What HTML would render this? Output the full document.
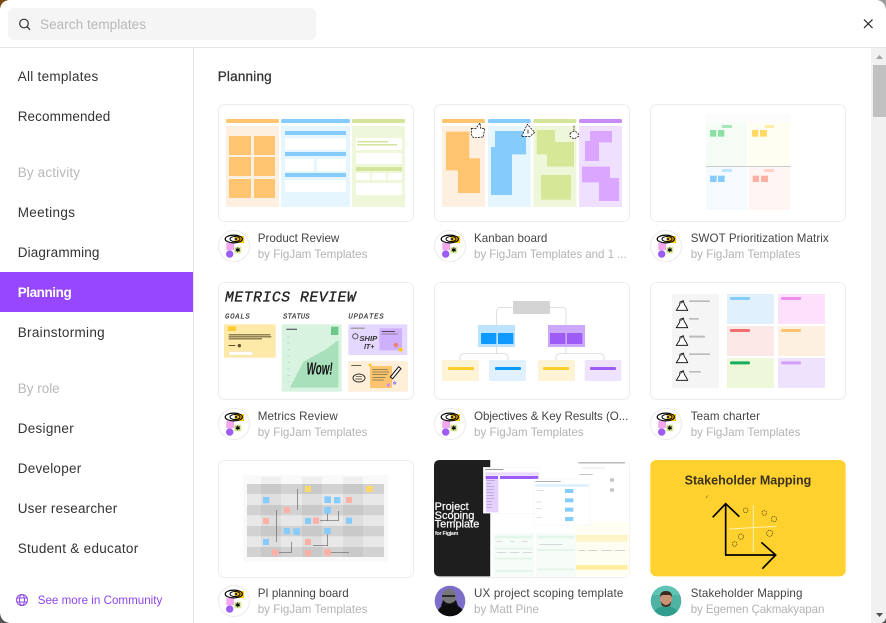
<!DOCTYPE html>
<html><head><meta charset="utf-8"><title>Templates</title>
<style>
html,body{margin:0;padding:0;background:#fff;width:886px;height:623px;overflow:hidden}
svg{display:block;filter:blur(.3px)}
text{font-family:"Liberation Sans",sans-serif}
.n{font-size:13.5px;fill:#333}
.m{font-size:13.5px;fill:#b8b8b8}
.t{font-size:11.6px;fill:#444}
.s{font-size:11.6px;fill:#b3b3b3}
.c{fill:#fff;stroke:#ececec;stroke-width:1}
</style></head><body>
<svg xmlns="http://www.w3.org/2000/svg" width="886" height="623" viewBox="0 0 886 623">
<defs>
<g id="fj">
<circle cx="16" cy="16" r="15.5" fill="#fff" stroke="#ebebeb"/>
<rect x="16.700" y="6" width="9.300" height="7" fill="#ffc700"/>
<rect x="8.300" y="13" width="7.700" height="7" fill="#f3a6f0"/>
<rect x="16.300" y="16.700" width="7" height="6.600" fill="#d8ea9e"/>
<circle cx="11.700" cy="24" r="3.700" fill="#9d5cf5"/>
<ellipse cx="15.800" cy="9" rx="8.600" ry="3.900" fill="none" stroke="#000" stroke-width="1.200"/>
<ellipse cx="17" cy="9" rx="5" ry="2.500" fill="none" stroke="#000" stroke-width="1"/>
<circle cx="18" cy="9" r="1.300" fill="#333"/>
<path d="M19.800 17.500v4.800M17.700 18.700l4.200 2.400M21.900 18.700l-4.200 2.400" stroke="#000" stroke-width="1"/>
</g>
<g id="hand"><path d="M-16 38 Q-10 28 -6 22 L-5 13 L5 9 L8 20 Q14 28 18 38 Z" fill="#fff" stroke="#000" stroke-width="2.500"/><path d="M-3 17 L4 12" stroke="#000" stroke-width="2"/></g>
</defs>

<rect width="886" height="623" fill="#fff"/>

<!-- header -->
<rect x="8" y="8" width="308" height="32" rx="6" fill="#f5f5f5"/>
<circle cx="24" cy="23.500" r="4.300" fill="none" stroke="#333" stroke-width="1.200"/>
<path d="M27 26.600 L30 29.700" stroke="#333" stroke-width="1.300"/>
<text x="40" y="29" class="m" textLength="106" lengthAdjust="spacing">Search templates</text>
<path d="M864 19.500 L872.500 28 M872.500 19.500 L864 28" stroke="#222" stroke-width="1.200"/>
<rect x="0" y="47" width="886" height="1" fill="#e6e6e6"/>

<!-- sidebar -->
<rect x="193" y="48" width="1" height="575" fill="#e6e6e6"/>
<rect x="0" y="272" width="193" height="40" fill="#9747ff"/>
<text x="17.700" y="81" class="n" textLength="80.600" lengthAdjust="spacing">All templates</text>
<text x="17.700" y="121" class="n" textLength="92.600" lengthAdjust="spacing">Recommended</text>
<text x="17.700" y="177" class="m" textLength="62.300" lengthAdjust="spacing">By activity</text>
<text x="17.700" y="217" class="n" textLength="57.300" lengthAdjust="spacing">Meetings</text>
<text x="17.700" y="257" class="n" textLength="81.700" lengthAdjust="spacing">Diagramming</text>
<text x="17.700" y="297" font-size="13.500" font-weight="700" fill="#fff" textLength="54" lengthAdjust="spacing">Planning</text>
<text x="17.700" y="337" class="n" textLength="87" lengthAdjust="spacing">Brainstorming</text>
<text x="17.700" y="393" class="m" textLength="42" lengthAdjust="spacing">By role</text>
<text x="17.700" y="433" class="n" textLength="56" lengthAdjust="spacing">Designer</text>
<text x="17.700" y="473" class="n" textLength="63.500" lengthAdjust="spacing">Developer</text>
<text x="17.700" y="513" class="n" textLength="99.500" lengthAdjust="spacing">User researcher</text>
<text x="17.700" y="553" class="n" textLength="120.500" lengthAdjust="spacing">Student &amp; educator</text>
<g fill="none" stroke="#8f45e8" stroke-width="1"><circle cx="22" cy="600" r="5.500"/><ellipse cx="22" cy="600" rx="2.500" ry="5.500"/><path d="M16.500 598H27.500M16.500 602H27.500"/></g>
<text x="37.700" y="604" font-size="11.600" fill="#8f45e8" textLength="124.600" lengthAdjust="spacing">See more in Community</text>

<!-- main heading -->
<text x="217.700" y="81" font-size="13.500" fill="#333" stroke="#333" stroke-width=".25" textLength="54" lengthAdjust="spacing">Planning</text>

<!-- cards -->
<rect class="c" x="218.500" y="104.500" width="195" height="117" rx="6"/>
<rect class="c" x="434.500" y="104.500" width="195" height="117" rx="6"/>
<rect class="c" x="650.500" y="104.500" width="195" height="117" rx="6"/>
<rect class="c" x="218.500" y="282.500" width="195" height="117" rx="6"/>
<rect class="c" x="434.500" y="282.500" width="195" height="117" rx="6"/>
<rect class="c" x="650.500" y="282.500" width="195" height="117" rx="6"/>
<rect class="c" x="218.500" y="460.500" width="195" height="117" rx="6"/>

<!-- Product Review -->
<g>
<rect x="226" y="119" width="53" height="4" rx="1.500" fill="#ffc470"/><rect x="281" y="119" width="69" height="4" rx="1.500" fill="#85cbfc"/><rect x="352" y="119" width="53" height="4" rx="1.500" fill="#d2e59a"/>
<rect x="226" y="126" width="53" height="81" fill="#fdf0e0"/><rect x="281" y="126" width="69" height="81" fill="#e5f6ff"/><rect x="352" y="126" width="53" height="81" fill="#eff7da"/>
<g fill="#ffc470"><rect x="229" y="136" width="22" height="19"/><rect x="254" y="136" width="21" height="19"/><rect x="229" y="157" width="22" height="19"/><rect x="254" y="157" width="21" height="19"/><rect x="229" y="179" width="22" height="19"/><rect x="254" y="179" width="21" height="19"/></g>
<g fill="#85cbfc"><rect x="285" y="131" width="61" height="4"/><rect x="285" y="152" width="61" height="4"/><rect x="285" y="173" width="61" height="4"/></g>
<g fill="#fff"><rect x="285" y="138" width="61" height="12"/><rect x="285" y="159" width="29" height="12"/><rect x="317" y="159" width="29" height="12"/><rect x="285" y="180" width="61" height="12"/>
<rect x="356" y="138" width="46" height="12"/><rect x="356" y="153" width="46" height="11"/><rect x="356" y="173" width="14" height="7"/><rect x="372" y="173" width="14" height="7"/><rect x="388" y="173" width="14" height="7"/><rect x="356" y="183" width="46" height="12"/></g>
<g fill="#d2e59a"><rect x="357" y="141" width="31" height="1.500"/><rect x="357" y="144" width="40" height="1.500"/><rect x="356" y="167" width="46" height="4"/></g>
</g>

<!-- Kanban + SWOT -->
<g transform="translate(430 95) scale(.33333)">
<rect x="36" y="72" width="129" height="12" rx="4" fill="#ffc470"/><rect x="174" y="72" width="128" height="12" rx="4" fill="#85cbfc"/><rect x="310" y="72" width="129" height="12" rx="4" fill="#d2e59a"/><rect x="447" y="72" width="129" height="12" rx="4" fill="#c98cf5"/>
<rect x="36" y="93" width="129" height="243" fill="#fdf0e0"/><rect x="174" y="93" width="128" height="243" fill="#e5f6ff"/><rect x="310" y="93" width="129" height="243" fill="#eff7da"/><rect x="447" y="93" width="129" height="243" fill="#efe0ff"/>
<path d="M48 110H118V190H150V294H84V226H48Z" fill="#ffc470"/>
<path d="M195 108H288V178H246V300H183V156H195Z" fill="#85cbfc"/>
<path d="M320 105H375V141H432V215H351V178H320Z" fill="#d6e897"/><rect x="333" y="240" width="90" height="74" fill="#d6e897"/>
<path d="M480 108H546V142H507V198H465V138H480Z" fill="#dba6ff"/><path d="M456 215H540V249H567V318H507V262H456Z" fill="#dba6ff"/>
<g fill="#fff" stroke="#000" stroke-width="2.200" stroke-dasharray="6 3"><path d="M124 100H138L150 84 L152 100 H164 L160 126 L130 128 L124 118Z"/><path d="M275 124 L292 88 L314 112 L300 124Z"/><path d="M432 92 V108 M420 116 Q430 104 444 114 L446 124 L432 132 L420 124Z"/></g>
<path d="M294 104V116" stroke="#000" stroke-width="2.200"/>

<rect x="828" y="57" width="254" height="27" fill="#fcfcfc"/>
<rect x="828" y="84" width="123" height="129" fill="#f5fcf5"/><rect x="955" y="84" width="127" height="129" fill="#fffef3"/><rect x="828" y="216" width="123" height="129" fill="#f4faff"/><rect x="955" y="216" width="125" height="129" fill="#fff6f3"/>
<rect x="828" y="213" width="254" height="1.500" fill="#999"/>
<rect x="876" y="90" width="30" height="9" fill="#a6e8b8"/><rect x="840" y="105" width="19" height="20" fill="#8ce0a5"/><rect x="864" y="105" width="19" height="20" fill="#8ce0a5"/>
<rect x="1004" y="90" width="28" height="9" fill="#ffecaa"/><rect x="966" y="105" width="19" height="20" fill="#ffd966"/><rect x="990" y="105" width="21" height="20" fill="#ffd966"/>
<rect x="876" y="222" width="30" height="9" fill="#c0e3ff"/><rect x="840" y="242" width="20" height="19" fill="#85cbfc"/><rect x="864" y="242" width="20" height="19" fill="#85cbfc"/>
<rect x="1002" y="222" width="30" height="9" fill="#ffcfc8"/><rect x="968" y="242" width="19" height="19" fill="#ffb0a5"/><rect x="993" y="242" width="21" height="19" fill="#ffb0a5"/>
</g>

<!-- Metrics Review -->
<g transform="translate(210 275) scale(.33333)">
<text x="45" y="80" font-size="44" font-style="italic" fill="#222" stroke="#222" stroke-width="1" style="font-family:'Liberation Mono',monospace" textLength="392" lengthAdjust="spacing">METRICS REVIEW</text>
<g font-size="22" font-style="italic" fill="#333" stroke="#333" stroke-width=".5"><text x="45" y="131" textLength="74" lengthAdjust="spacing" style="font-family:'Liberation Mono',monospace">GOALS</text><text x="219" y="131" textLength="80" lengthAdjust="spacing" style="font-family:'Liberation Mono',monospace">STATUS</text><text x="415" y="131" textLength="106" lengthAdjust="spacing" style="font-family:'Liberation Mono',monospace">UPDATES</text></g>
<rect x="42" y="148" width="155" height="100" fill="#fde9a8"/><rect x="54" y="154" width="24" height="14" fill="#ffcc33"/>
<g fill="#5a4f2a"><rect x="56" y="178" width="125" height="3"/><rect x="56" y="184" width="128" height="3"/><rect x="56" y="190" width="100" height="3"/><rect x="56" y="210" width="20" height="3"/><circle cx="88" cy="212" r="5"/></g>
<rect x="57" y="230" width="70" height="10" fill="#fff" stroke="#ddd"/>
<rect x="215" y="148" width="180" height="202" fill="#d8f3df"/>
<path d="M240 338L280 260L345 225L385 195V338Z" fill="#a8e0bb"/>
<rect x="363" y="155" width="22" height="25" fill="#6cc88a"/>
<rect x="229" y="161" width="32" height="4" fill="#667"/>
<g fill="#bcd"><rect x="232" y="185" width="8" height="2"/><rect x="232" y="203" width="8" height="2"/><rect x="232" y="222" width="8" height="2"/><rect x="232" y="242" width="8" height="2"/><rect x="232" y="262" width="8" height="2"/><rect x="232" y="281" width="8" height="2"/><rect x="232" y="300" width="8" height="2"/><rect x="232" y="320" width="8" height="2"/></g>
<text x="290" y="298" font-size="52" font-weight="700" font-style="italic" fill="#111" textLength="78" lengthAdjust="spacingAndGlyphs">Wow!</text>
<rect x="415" y="148" width="177" height="92" fill="#e5d8ff"/><rect x="508" y="160" width="68" height="66" fill="#cfb0ff"/>
<text x="448" y="198" font-size="23" font-weight="700" font-style="italic" fill="#333">SHIP</text><text x="462" y="222" font-size="21" font-weight="700" font-style="italic" fill="#333">IT+</text>
<rect x="422" y="158" width="42" height="3" fill="#887"/><rect x="515" y="168" width="40" height="3" fill="#545"/><rect x="515" y="176" width="48" height="2" fill="#765"/>
<circle cx="436" cy="184" r="8" fill="none" stroke="#444" stroke-width="2.500"/><circle cx="558" cy="210" r="7" fill="#f08080"/><circle cx="572" cy="224" r="6" fill="#ffc700"/>
<rect x="415" y="258" width="179" height="92" fill="#fdefd8"/><rect x="480" y="273" width="66" height="66" fill="#ffc470"/>
<g fill="#664"><rect x="424" y="270" width="30" height="3"/><rect x="487" y="282" width="46" height="2"/><rect x="487" y="290" width="50" height="2"/><rect x="487" y="298" width="44" height="2"/><rect x="487" y="306" width="40" height="2"/><rect x="487" y="314" width="34" height="2"/></g>
<ellipse cx="447" cy="309" rx="18" ry="12" fill="none" stroke="#333" stroke-width="3"/><path d="M438 304h18M436 312h20" stroke="#333" stroke-width="2"/>
<path d="M541 306L566 275L573 281L548 311Z" fill="#fff" stroke="#111" stroke-width="3"/>
<circle cx="535" cy="330" r="5" fill="#c98cf5"/><circle cx="554" cy="324" r="5" fill="#9d8cf5"/><circle cx="480" cy="270" r="4" fill="#ffc700"/>
</g>

<!-- OKR + Team charter -->
<g transform="translate(430 275) scale(.33333)">
<g fill="none" stroke="#d0d0d0" stroke-width="2"><path d="M249 97H212Q200 97 200 109V150"/><path d="M360 97H396Q408 97 408 109V150"/><path d="M90 255V247Q90 236 102 236H222Q234 236 234 247V255"/><path d="M378 255V247Q378 236 390 236H510Q522 236 522 247V255"/><path d="M200 216V236M408 216V236"/></g>
<rect x="249" y="78" width="111" height="39" fill="#d4d4d4"/>
<rect x="144" y="150" width="111" height="66" fill="#bde3ff"/><rect x="153" y="174" width="46" height="33" rx="3" fill="#0d99ff"/><rect x="204" y="174" width="46" height="33" fill="#0d99ff"/>
<rect x="354" y="150" width="111" height="66" fill="#cba8f9"/><rect x="360" y="174" width="46" height="33" fill="#9d5cf5"/><rect x="411" y="174" width="46" height="33" fill="#9d5cf5"/>
<rect x="36" y="255" width="111" height="63" rx="3" fill="#fff3d6"/><rect x="54" y="276" width="78" height="9" rx="3" fill="#ffcd29"/>
<rect x="177" y="255" width="111" height="63" rx="3" fill="#e0f1fd"/><rect x="195" y="276" width="78" height="9" rx="3" fill="#0d99ff"/>
<rect x="324" y="255" width="111" height="63" rx="3" fill="#fff3d6"/><rect x="339" y="276" width="78" height="9" rx="3" fill="#ffcd29"/>
<rect x="464" y="255" width="110" height="63" rx="3" fill="#efe2fd"/><rect x="480" y="276" width="78" height="9" rx="3" fill="#9d5cf5"/>

<rect x="726" y="57" width="141" height="283" fill="#f5f5f5"/>
<use href="#hand" x="755" y="68"/><use href="#hand" x="755" y="120"/><use href="#hand" x="755" y="173"/><use href="#hand" x="755" y="225"/><use href="#hand" x="755" y="278"/>
<g fill="#bbb"><rect x="777" y="76" width="63" height="5" rx="2"/><rect x="777" y="129" width="30" height="5" rx="2"/><rect x="777" y="182" width="48" height="6" rx="2"/><rect x="777" y="235" width="63" height="5" rx="2"/><rect x="777" y="288" width="36" height="5" rx="2"/></g>
<rect x="891" y="57" width="141" height="90" fill="#e0f0fd"/><rect x="900" y="66" width="60" height="9" rx="3" fill="#85cbfc"/>
<rect x="1044" y="57" width="141" height="90" fill="#fde0fb"/><rect x="1053" y="66" width="60" height="9" rx="3" fill="#f08df0"/>
<rect x="891" y="153" width="141" height="90" fill="#fde8e8"/><rect x="900" y="162" width="60" height="9" rx="3" fill="#f07070"/>
<rect x="1044" y="153" width="141" height="90" fill="#fdf0e0"/><rect x="1053" y="162" width="60" height="9" rx="3" fill="#ffc470"/>
<rect x="891" y="249" width="141" height="90" fill="#eff7da"/><rect x="900" y="259" width="60" height="9" rx="4" fill="#14ae5c"/>
<rect x="1044" y="249" width="141" height="90" fill="#efe2fd"/><rect x="1053" y="259" width="60" height="9" rx="3" fill="#d69ff5"/>
</g>

<!-- PI planning -->
<g transform="translate(210 450) scale(.33333)">
<rect x="100" y="75" width="435" height="260" fill="#f9f9f9"/>
<g fill="#e8e8e8"><rect x="111" y="132" width="411" height="33"/><rect x="111" y="196" width="411" height="32"/><rect x="111" y="259" width="411" height="32"/></g>
<g fill="#d2d2d2"><rect x="111" y="102" width="411" height="30"/><rect x="111" y="165" width="411" height="31"/><rect x="111" y="228" width="411" height="31"/><rect x="111" y="291" width="411" height="30"/></g>
<g fill="#000" fill-opacity=".04"><rect x="153" y="81" width="60" height="240"/><rect x="276" y="81" width="60" height="240"/><rect x="399" y="81" width="60" height="240"/></g>
<g fill="none" stroke="#666" stroke-width="2"><path d="M263 117V180M200 180V276M245 276V307H207M353 190V212H330M385 183V212H353M353 253V287H309M360 307H417"/></g>
<g fill="#85cbfc"><rect x="159" y="141" width="19" height="19"/><rect x="343" y="139" width="20" height="20"/><rect x="372" y="141" width="19" height="19"/><rect x="343" y="171" width="20" height="20"/><rect x="285" y="204" width="18" height="18"/><rect x="408" y="203" width="18" height="18"/><rect x="221" y="234" width="19" height="19"/><rect x="250" y="235" width="20" height="20"/><rect x="343" y="234" width="19" height="18"/><rect x="159" y="267" width="18" height="18"/></g>
<g fill="#ffb0a5"><rect x="408" y="141" width="18" height="18"/><rect x="222" y="171" width="18" height="18"/><rect x="159" y="204" width="18" height="18"/><rect x="309" y="203" width="18" height="18"/><rect x="285" y="267" width="18" height="18"/><rect x="186" y="298" width="19" height="19"/><rect x="285" y="300" width="18" height="18"/><rect x="343" y="297" width="20" height="20"/></g>
<g fill="#ffd966"><rect x="285" y="108" width="18" height="18"/><rect x="468" y="108" width="20" height="18"/></g>
</g>

<!-- UX project scoping -->
<rect class="c" x="434.500" y="460.500" width="195" height="117" rx="6"/>
<g transform="translate(430 455) scale(.33333)">
<path d="M30 15H181V364H30Q12 364 12 346V33Q12 15 30 15Z" fill="#1e1e1e"/>
<path d="M181 15H580Q598 15 598 33V346Q598 364 580 364H181Z" fill="#fff"/>
<g fill="#fff" stroke="#fff" stroke-width=".6" font-size="33"><text x="14" y="165" textLength="102" lengthAdjust="spacingAndGlyphs">Project</text><text x="14" y="192" textLength="119" lengthAdjust="spacingAndGlyphs">Scoping</text><text x="14" y="218" textLength="134" lengthAdjust="spacingAndGlyphs">Template</text></g>
<text x="15" y="240" font-size="16" fill="#fff" font-weight="700" textLength="70" lengthAdjust="spacing">for Figjam</text>
<rect x="433" y="200" width="165" height="164" fill="#fffef3"/><rect x="438" y="240" width="155" height="20" fill="#fff4c8"/><rect x="438" y="330" width="155" height="14" fill="#ffeda0"/>
<g fill="#bbb"><rect x="445" y="286" width="20" height="2"/><rect x="475" y="286" width="28" height="2"/><rect x="515" y="286" width="30" height="2"/><rect x="555" y="286" width="30" height="2"/></g>
<rect x="190" y="235" width="123" height="129" fill="#f6fcf8"/><rect x="318" y="235" width="120" height="129" fill="#f6fcf8"/>
<g fill="#e4f6ea"><rect x="195" y="242" width="113" height="8"/><rect x="195" y="278" width="113" height="6"/><rect x="195" y="308" width="113" height="6"/><rect x="195" y="345" width="113" height="6"/><rect x="323" y="242" width="110" height="8"/><rect x="323" y="282" width="110" height="6"/><rect x="323" y="340" width="110" height="6"/></g>
<g fill="#c8c8c8"><rect x="200" y="258" width="14" height="2"/><rect x="240" y="258" width="14" height="2"/><rect x="278" y="258" width="14" height="2"/><rect x="200" y="292" width="30" height="2"/><rect x="240" y="292" width="28" height="2"/><rect x="278" y="292" width="28" height="2"/><rect x="328" y="268" width="70" height="2"/></g>
<rect x="445" y="22" width="140" height="3" fill="#999"/><rect x="455" y="38" width="70" height="2" fill="#ddd"/><rect x="448" y="57" width="40" height="2" fill="#aaa"/>
<g fill="#c4c4c4"><rect x="540" y="70" width="12" height="10"/><rect x="540" y="100" width="12" height="10"/><rect x="450" y="72" width="16" height="2"/></g>
<rect x="160" y="37" width="170" height="138" fill="#fff" stroke="#ececec"/><rect x="165" y="42" width="55" height="3" fill="#999"/>
<rect x="165" y="52" width="162" height="10" fill="#eadcff"/><rect x="167" y="63" width="38" height="109" fill="#e5d0ff"/><rect x="167" y="63" width="37" height="9" fill="#9d5cf5"/><rect x="210" y="63" width="115" height="9" fill="#9d5cf5"/>
<g fill="#a99ac0"><rect x="170" y="76" width="24" height="2"/><rect x="170" y="85" width="14" height="2"/><rect x="170" y="94" width="22" height="2"/><rect x="170" y="103" width="22" height="2"/><rect x="170" y="112" width="22" height="2"/><rect x="170" y="121" width="22" height="2"/><rect x="170" y="130" width="24" height="2"/><rect x="170" y="139" width="16" height="2"/><rect x="170" y="148" width="16" height="2"/><rect x="170" y="157" width="16" height="2"/></g>
<rect x="312" y="72" width="168" height="138" fill="#fff" stroke="#ececec"/><rect x="316" y="78" width="76" height="2" fill="#888"/><rect x="316" y="88" width="160" height="7" fill="#d8eefd"/>
<g fill="#85cbfc"><rect x="405" y="102" width="25" height="12"/><rect x="405" y="130" width="25" height="12"/><rect x="405" y="158" width="25" height="12"/><rect x="405" y="186" width="25" height="12"/></g>
<g fill="#ccc"><rect x="320" y="106" width="22" height="2"/><rect x="320" y="140" width="14" height="2"/><rect x="320" y="160" width="14" height="2"/><rect x="320" y="186" width="14" height="2"/></g>
</g>

<!-- Stakeholder -->
<g transform="translate(640 455) scale(.33333)">
<rect x="31" y="15" width="586" height="349" rx="18" fill="#ffd12e"/>
<text x="134" y="89" font-size="38" font-weight="700" fill="#3a3320" textLength="380" lengthAdjust="spacingAndGlyphs">Stakeholder Mapping</text>
<path d="M340 150V290M268 222L410 214" stroke="#fff2b0" stroke-width="3" fill="none"/>
<path d="M257 300V146M218 187L257 146L298 185M255 300H407M364 262L407 300L367 341" stroke="#000" stroke-width="5" fill="none"/>
<g fill="none" stroke="#4a3d10" stroke-width="2" stroke-dasharray="4 2"><circle cx="317" cy="166" r="7"/><circle cx="373" cy="174" r="7"/><circle cx="402" cy="192" r="8"/><circle cx="303" cy="245" r="8"/><circle cx="284" cy="267" r="7"/><circle cx="389" cy="235" r="9"/><path d="M198 128l6-6"/></g>
</g>

<!-- avatars -->
<use href="#fj" x="218" y="230"/><use href="#fj" x="434" y="230"/><use href="#fj" x="650" y="230"/>
<use href="#fj" x="218" y="408"/><use href="#fj" x="434" y="408"/><use href="#fj" x="650" y="408"/>
<use href="#fj" x="218" y="585"/>
<clipPath id="a1"><circle cx="450" cy="601" r="15.300"/></clipPath>
<g clip-path="url(#a1)"><rect x="434" y="585" width="32" height="32" fill="#7d6fc9"/><ellipse cx="449" cy="597" rx="7" ry="8" fill="#777"/><path d="M443 600Q449 607 456 600L458 606Q449 612 441 606Z" fill="#111"/><path d="M436 618Q437 607 445 605L456 605Q465 609 466 618Z" fill="#0c0c0c"/><path d="M442 596h13" stroke="#111" stroke-width="1.500"/></g>
<clipPath id="a2"><circle cx="666" cy="601" r="15.300"/></clipPath>
<g clip-path="url(#a2)"><rect x="650" y="585" width="32" height="32" fill="#4fb3a4"/><rect x="650" y="585" width="32" height="10" fill="#5fc4b4"/><path d="M652 618Q654 608 661 607H671Q679 609 680 618Z" fill="#2f9e8c"/><ellipse cx="666" cy="599" rx="6" ry="7.500" fill="#c99578"/><path d="M660 597Q660 591 666 591Q672 591 672 597L670 595H662Z" fill="#3a2b22"/><path d="M660.500 601Q666 609 671.500 601L670 606Q666 608 662 606Z" fill="#4a3528"/></g>

<!-- captions -->
<text x="257.700" y="242" class="t" textLength="81.600" lengthAdjust="spacing">Product Review</text>
<text x="257.700" y="258" class="s" textLength="109.700" lengthAdjust="spacing">by FigJam Templates</text>
<text x="474" y="242" class="t" textLength="73.300" lengthAdjust="spacing">Kanban board</text>
<text x="474" y="258" class="s" textLength="152.700" lengthAdjust="spacing">by FigJam Templates and 1 ...</text>
<text x="690.700" y="242" class="t" textLength="138" lengthAdjust="spacing">SWOT Prioritization Matrix</text>
<text x="690.700" y="258" class="s" textLength="109.700" lengthAdjust="spacing">by FigJam Templates</text>
<text x="257.700" y="420" class="t" textLength="80" lengthAdjust="spacing">Metrics Review</text>
<text x="257.700" y="436" class="s" textLength="109.700" lengthAdjust="spacing">by FigJam Templates</text>
<text x="474" y="420" class="t" textLength="154.300" lengthAdjust="spacing">Objectives &amp; Key Results (O...</text>
<text x="474" y="436" class="s" textLength="109.700" lengthAdjust="spacing">by FigJam Templates</text>
<text x="690.700" y="420" class="t" textLength="69.300" lengthAdjust="spacing">Team charter</text>
<text x="690.700" y="436" class="s" textLength="109.700" lengthAdjust="spacing">by FigJam Templates</text>
<text x="257.700" y="597" class="t" textLength="91" lengthAdjust="spacing">PI planning board</text>
<text x="257.700" y="613" class="s" textLength="109.700" lengthAdjust="spacing">by FigJam Templates</text>
<text x="474" y="597" class="t" textLength="149.300" lengthAdjust="spacing">UX project scoping template</text>
<text x="474" y="613" class="s" textLength="65" lengthAdjust="spacing">by Matt Pine</text>
<text x="690.700" y="597" class="t" textLength="111.700" lengthAdjust="spacing">Stakeholder Mapping</text>
<text x="690.700" y="613" class="s" textLength="133.700" lengthAdjust="spacing">by Egemen Çakmakyapan</text>

<!-- scrollbar -->
<rect x="871" y="48" width="15" height="575" fill="#f1f1f1"/>
<rect x="873" y="65" width="13" height="52" fill="#c1c1c1"/>
<path d="M876 59L879.500 55L883 59Z" fill="#a3a3a3"/>
<path d="M876 613L879.500 617L883 613Z" fill="#505050"/>

<!-- window corners -->
<path d="M0 0H9Q1 1 0 9Z" fill="#7a4a10"/>
<path d="M877 0H886V10Q885 1 877 0Z" fill="#9a9a9a"/>
<path d="M0 613V623H10Q1 622 0 613Z" fill="#555"/>
<path d="M886 618V623H881Q885 622 886 618Z" fill="#555"/>
</svg>
</body></html>
